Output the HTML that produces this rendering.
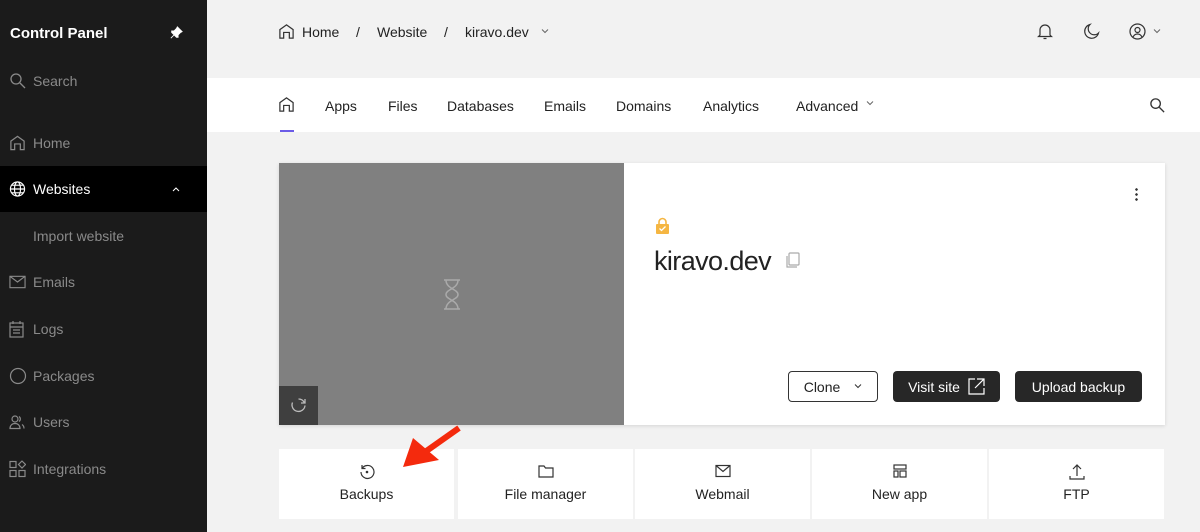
<!DOCTYPE html>
<html><head><style>
*{margin:0;padding:0;box-sizing:border-box}
body{width:1200px;height:532px;overflow:hidden;background:#f2f2f2;font-family:"Liberation Sans",sans-serif;position:relative}
.sb{position:absolute;left:0;top:0;width:207px;height:532px;background:#1b1b1b;color:#8a8a8a;font-size:14px}
.sb .it{position:absolute;left:0;width:207px;height:46px;display:flex;align-items:center;padding-left:33px}
.sb svg{position:absolute;left:9px;top:50%;transform:translateY(-50%)}
.a{position:absolute}
.t{position:absolute;font-size:14px;color:#222}
.tile{position:absolute;top:449px;height:70px;width:175px;background:#fff;text-align:center;font-size:14px;color:#222}
.tile svg{position:absolute;left:50%;top:15px;margin-left:-8px}
.tile span{position:absolute;left:0;right:0;top:37px}
.btn{position:absolute;top:371px;height:31px;border-radius:4px;font-size:14px;display:flex;align-items:center;justify-content:center}
</style></head><body>
<div class="sb">
<div style="position:absolute;left:10px;top:25px;color:#fff;font-weight:bold;font-size:15px">Control Panel</div>
<div style="position:absolute;left:170px;top:26px;color:#fff;font-size:12px">
<svg width="13" height="13" viewBox="0 0 16 16" style="position:static;transform:none"><path d="M9 1l6 6-2 1-3 3 0 3-2 0-6-6 0-2 3 0 3-3z M5 11l-4 4" fill="#fff" stroke="#fff" stroke-width="1"/></svg></div>
<div class="it" style="top:58px"><svg width="18" height="18" viewBox="0 0 18 18" fill="none" stroke="#8a8a8a" stroke-width="1.3"><circle cx="7" cy="7" r="5"/><path d="M11 11l5 5"/></svg>Search</div>
<div class="it" style="top:120px"><svg width="17" height="17" viewBox="0 0 18 18" fill="none" stroke="#8a8a8a" stroke-width="1.3"><path d="M2 16V7l7-5 7 5v9h-4v-6H6v6z"/></svg>Home</div>
<div class="it" style="top:166px;background:#000;color:#fff"><svg width="17" height="17" viewBox="0 0 18 18" fill="none" stroke="#fff" stroke-width="1.2"><circle cx="9" cy="9" r="7.5"/><ellipse cx="9" cy="9" rx="3.2" ry="7.5"/><path d="M1.5 9h15M3 5h12M3 13h12"/></svg>Websites<svg style="left:172px" width="8" height="5" viewBox="0 0 8 5" fill="none" stroke="#fff" stroke-width="1"><path d="M1 4.5l3-3 3 3"/></svg></div>
<div class="it" style="top:213px">Import website</div>
<div class="it" style="top:259px"><svg width="17" height="14" viewBox="0 0 18 14" fill="none" stroke="#8a8a8a" stroke-width="1.2"><rect x="1" y="1" width="16" height="12"/><path d="M1 1l8 6 8-6"/></svg>Emails</div>
<div class="it" style="top:306px"><svg width="15" height="18" viewBox="0 0 15 18" fill="none" stroke="#8a8a8a" stroke-width="1.2"><rect x="1" y="3" width="13" height="14"/><path d="M4 1v3M11 1v3M1 7h13M4 10h7M4 13h7"/></svg>Logs</div>
<div class="it" style="top:353px"><svg width="18" height="18" viewBox="0 0 18 18" fill="none" stroke="#8a8a8a" stroke-width="1.2"><circle cx="9" cy="9" r="7.5"/></svg>Packages</div>
<div class="it" style="top:399px"><svg width="17" height="15" viewBox="0 0 17 15" fill="none" stroke="#8a8a8a" stroke-width="1.2"><circle cx="6" cy="4.5" r="3"/><path d="M1 14c0-3 2-5 5-5s5 2 5 5zM10 2a3 3 0 010 5M13 10c1.5 1 2 2.5 2 4"/></svg>Users</div>
<div class="it" style="top:446px"><svg width="17" height="17" viewBox="0 0 17 17" fill="none" stroke="#8a8a8a" stroke-width="1.2"><rect x="1" y="1" width="6" height="6"/><rect x="1" y="10" width="6" height="6"/><rect x="10" y="10" width="6" height="6"/><path d="M13 0.5l3.5 3.5-3.5 3.5-3.5-3.5z"/></svg>Integrations</div>
</div>

<svg class="a" style="left:278px;top:23px" width="17" height="17" viewBox="0 0 18 18" fill="none" stroke="#333" stroke-width="1.3"><path d="M2 16V7l7-5 7 5v9h-4v-6H6v6z"/></svg>
<div class="t" style="left:302px;top:24px">Home</div>
<div class="t" style="left:356px;top:24px">/</div>
<div class="t" style="left:377px;top:24px">Website</div>
<div class="t" style="left:444px;top:24px">/</div>
<div class="t" style="left:465px;top:24px">kiravo.dev</div>
<svg class="a" style="left:541px;top:29px" width="8" height="5" viewBox="0 0 8 5" fill="none" stroke="#666" stroke-width="1"><path d="M1 .5l3 3 3-3"/></svg>
<svg class="a" style="left:1037px;top:23px" width="16" height="17" viewBox="0 0 16 17" fill="none" stroke="#333" stroke-width="1.2"><path d="M3 12V7a5 5 0 0110 0v5l1.5 1.5h-13zM6.5 15.5h3"/></svg>
<svg class="a" style="left:1083px;top:23px" width="17" height="17" viewBox="0 0 17 17" fill="none" stroke="#333" stroke-width="1.2"><path d="M7 1.5A7 7 0 1015.5 10 5.5 5.5 0 017 1.5z"/></svg>
<svg class="a" style="left:1129px;top:23px" width="17" height="17" viewBox="0 0 17 17" fill="none" stroke="#333" stroke-width="1.2"><circle cx="8.5" cy="8.5" r="7.5"/><circle cx="8.5" cy="7" r="2.5"/><path d="M4 14c1-2 3-3 4.5-3s3.5 1 4.5 3"/></svg>
<svg class="a" style="left:1153px;top:29px" width="8" height="5" viewBox="0 0 8 5" fill="none" stroke="#666" stroke-width="1"><path d="M1 .5l3 3 3-3"/></svg>

<div class="a" style="left:207px;top:78px;width:993px;height:54px;background:#fff"></div>
<svg class="a" style="left:278px;top:96px" width="17" height="17" viewBox="0 0 18 18" fill="none" stroke="#333" stroke-width="1.3"><path d="M2 16V7l7-5 7 5v9h-4v-6H6v6z"/></svg>
<div class="a" style="left:280px;top:130px;width:14px;height:2px;background:#6b5ce7"></div>
<div class="t" style="left:325px;top:98px">Apps</div>
<div class="t" style="left:388px;top:98px">Files</div>
<div class="t" style="left:447px;top:98px">Databases</div>
<div class="t" style="left:544px;top:98px">Emails</div>
<div class="t" style="left:616px;top:98px">Domains</div>
<div class="t" style="left:703px;top:98px">Analytics</div>
<div class="t" style="left:796px;top:98px">Advanced</div>
<svg class="a" style="left:866px;top:101px" width="8" height="5" viewBox="0 0 8 5" fill="none" stroke="#666" stroke-width="1"><path d="M1 .5l3 3 3-3"/></svg>
<svg class="a" style="left:1149px;top:97px" width="17" height="17" viewBox="0 0 18 18" fill="none" stroke="#333" stroke-width="1.4"><circle cx="7" cy="7" r="5"/><path d="M11 11l5 5"/></svg>

<div class="a" style="left:279px;top:163px;width:886px;height:262px;background:#fff;box-shadow:0 1px 4px rgba(0,0,0,.12)"></div>
<div class="a" style="left:279px;top:163px;width:345px;height:262px;background:#808080"></div>
<svg class="a" style="left:442px;top:279px" width="20" height="31" viewBox="0 0 20 31" fill="none" stroke="#aaa" stroke-width="1.5"><path d="M2 1h16M2 30h16M4 1c0 9 12 9 12 14.5S4 21 4 30M16 1c0 9-12 9-12 14.5S16 21 16 30"/></svg>
<div class="a" style="left:279px;top:386px;width:39px;height:39px;background:#3f3f3f"></div>
<svg class="a" style="left:289px;top:396px" width="19" height="19" viewBox="0 0 19 19" fill="none" stroke="#bbb" stroke-width="1.3"><path d="M16 9.5A6.5 6.5 0 113.5 6.5M16 3v4h-4"/><path d="M15.5 7A6.5 6.5 0 009.5 3"/></svg>
<svg class="a" style="left:655px;top:217px" width="15" height="17" viewBox="0 0 15 17"><path d="M4 8V5a3.5 3.5 0 017 0v3" fill="none" stroke="#f5b642" stroke-width="1.6"/><rect x="1" y="7" width="13" height="10" rx="1" fill="#f5b642"/><path d="M4.5 11.5l2 2 4-4" fill="none" stroke="#fff" stroke-width="1.3"/></svg>
<div class="a" style="left:654px;top:246px;font-size:27px;color:#222;letter-spacing:-0.6px">kiravo.dev</div>
<svg class="a" style="left:785px;top:252px" width="16" height="17" viewBox="0 0 16 17" fill="none" stroke="#aaa" stroke-width="1.2"><rect x="4" y="1" width="10" height="12" rx="1"/><path d="M2 4v11h10"/></svg>
<div class="a" style="left:1135px;top:187px;width:3px;height:15px;background:radial-gradient(circle,#333 1.2px,transparent 1.4px) 0 0/3px 5px"></div>
<div class="btn" style="left:788px;width:90px;border:1px solid #333;background:#fff;color:#222">Clone<svg style="margin-left:14px" width="8" height="5" viewBox="0 0 8 5" fill="none" stroke="#333" stroke-width="1"><path d="M1 .5l3 3 3-3"/></svg></div>
<div class="btn" style="left:893px;width:107px;background:#272727;color:#fff">Visit site
<svg style="margin-left:8px" width="17" height="17" viewBox="0 0 17 17" fill="none" stroke="#fff" stroke-width="1.2"><path d="M7 1H1v15h15v-6M9 1h7v7M16 1L7 10"/></svg></div>
<div class="btn" style="left:1015px;width:127px;background:#272727;color:#fff">Upload backup</div>

<div class="tile" style="left:279px"><svg width="16" height="16" viewBox="0 0 16 16" fill="none" stroke="#333" stroke-width="1.2"><path d="M3 4.5A6.5 6.5 0 112 8M3 1v3.5h3.5"/><circle cx="8" cy="8" r=".7" fill="#333"/></svg><span>Backups</span></div>
<div class="tile" style="left:458px"><svg width="16" height="14" viewBox="0 0 16 14" fill="none" stroke="#333" stroke-width="1.2"><path d="M1 2h5l1.5 2H15v9H1z"/></svg><span>File manager</span></div>
<div class="tile" style="left:635px"><svg width="16" height="14" viewBox="0 0 16 14" fill="none" stroke="#333" stroke-width="1.2"><rect x="1" y="1.5" width="14" height="11"/><path d="M1 1.5l7 6 7-6"/></svg><span>Webmail</span></div>
<div class="tile" style="left:812px"><svg width="16" height="14" viewBox="0 0 16 14" fill="none" stroke="#333" stroke-width="1.2"><rect x="2" y="1" width="12" height="4"/><rect x="2" y="7" width="4" height="6"/><rect x="8" y="7" width="6" height="6"/></svg><span>New app</span></div>
<div class="tile" style="left:989px"><svg width="16" height="16" viewBox="0 0 16 16" fill="none" stroke="#333" stroke-width="1.2"><path d="M8 12V1M4 5l4-4 4 4M1 12v3h14v-3"/></svg><span>FTP</span></div>

<svg class="a" style="left:395px;top:420px" width="70" height="50" viewBox="0 0 70 50"><path d="M64 8L30 32" stroke="#f42a0d" stroke-width="6"/><path d="M8 47L18 18 44 40z" fill="#f42a0d"/></svg>
</body></html>
